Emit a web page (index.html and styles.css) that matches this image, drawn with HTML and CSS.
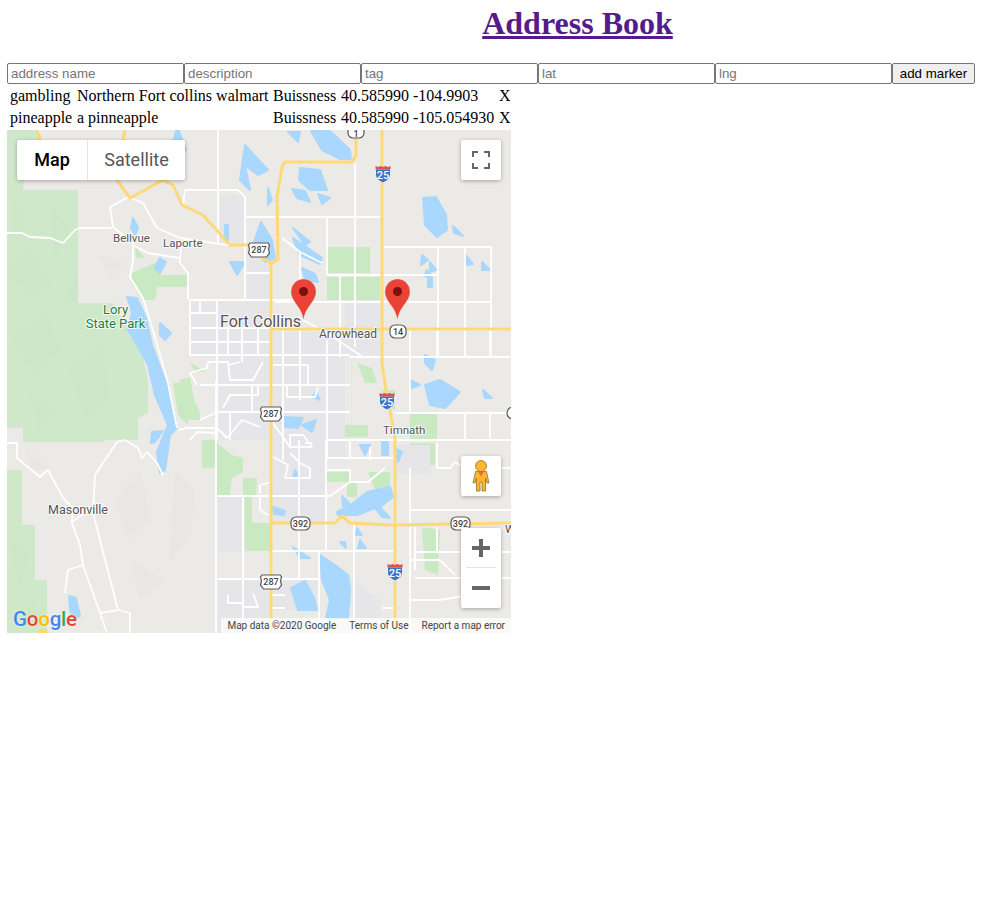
FILE: index.html
```html
<!DOCTYPE html>
<html lang="en">
<head>
    <meta charset="UTF-8">
    <title>Address Book</title>
    <link rel="stylesheet" href="styles.css">
</head>
<body>
    <h1 class="title"><a href="#">Address Book</a></h1>

    <form class="marker-form">
        <input type="text" placeholder="address name">
        <input type="text" placeholder="description">
        <input type="text" placeholder="tag">
        <input type="text" placeholder="lat">
        <input type="text" placeholder="lng">
        <button type="button">add marker</button>
    </form>

    <table class="addresses">
        <colgroup>
            <col class="col-name">
            <col class="col-desc">
            <col class="col-tag">
            <col class="col-lat">
            <col class="col-lng">
            <col>
        </colgroup>
        <tr>
            <td>gambling</td>
            <td>Northern Fort collins walmart</td>
            <td>Buissness</td>
            <td>40.585990</td>
            <td>-104.9903</td>
            <td>X</td>
        </tr>
        <tr>
            <td>pineapple</td>
            <td>a pinneapple</td>
            <td>Buissness</td>
            <td>40.585990</td>
            <td>-105.054930</td>
            <td>X</td>
        </tr>
    </table>

    <div class="map">
        <svg class="map-tiles" viewBox="7 130 504 503" width="504" height="503">
            <defs>
                <g id="pin">
                    <path class="pin-body" d="M0 41C-2 27-12.500 23-12.500 12.500a12.500 12.500 0 0 1 25 0C12.500 23 2 27 0 41Z"/>
                    <circle class="pin-dot" cx="0" cy="12.500" r="4.500"/>
                </g>
                <g id="us-shield">
                    <path class="shield" d="M-9-7h18l1.500 2-1 4 1 4-3 4h-15l-3-4 1-4-1-4Z"/>
                </g>
                <g id="i-shield">
                    <path class="i-blue" d="M-7.500-5h15v5c0 5-4 7-7.500 9-3.500-2-7.500-4-7.500-9Z"/>
                    <path class="i-red" d="M-7.500-8l2.500 1 2.500-1 2.500 1 2.500-1 2.500 1 2.500-1v3.500h-15Z"/>
                </g>
            </defs>

            <rect class="land" x="7" y="130" width="504" height="503"/>

            <!-- hill shading -->
            <path class="hill" d="M100 255 125 262 110 280ZM90 320 100 345 88 352ZM115 500 140 470 150 520 128 540ZM175 470 195 490 190 540 170 560ZM130 560 165 580 140 600ZM25 445 50 470 32 470Z"/>

            <!-- forest and parks -->
            <path class="park" d="M7 130H37L40 150 24 176 23 190H78V303H113L125 322 140 345 148 380V413L138 418V440H105V442H23V428H7Z"/>
            <path class="park" d="M7 470H22V525H35V580H47V633H7Z"/>
            <path class="park-shade" d="M7 270 30 245 50 285 30 300ZM50 200 70 230 55 260ZM12 340 45 310 60 350 35 380ZM70 370 100 345 110 400 85 420ZM30 395 60 410 40 430ZM15 200 30 215 15 235ZM65 300 78 270V303ZM10 540 30 550 20 590ZM30 600 45 625 25 625Z"/>
            <path class="park-light" d="M132 273 157 262H166L160 275H188V287H157L155 300H143L132 282ZM135 247 145 258H136Z"/>
            <path class="park-light" d="M173 383H186L200 413V420H188V425L178 415Z"/>
            <path class="park-light" d="M202 440H215V468H202ZM217 443 232 455 243 458V472L232 478 230 495H217ZM243 478H257L256 495H243ZM245 497H252V523H245ZM245 523H270V551H245Z"/>
            <path class="park-light" d="M328 247H370V273H328ZM327 277H380V300H327ZM355 303H368V327H355ZM357 363 372 368 377 383H365ZM410 413H437V440H410ZM273 482H292V493H273ZM312 497H326V523H318ZM312 468H325V482H312ZM327 472H350V482H327ZM347 482H357V497H347ZM368 472H390V490H375ZM345 425H368V437H345ZM410 443H435V465H410ZM422 527 440 530 438 575 425 570ZM195 345H210V352H195ZM190 362 205 372 195 372ZM235 380H250V385H235ZM250 368 257 378H245Z"/>
            <path class="park-light" d="M180 380 190 377 196 412 188 420 180 400ZM300 370H320V378H300ZM382 390H395V410L385 405Z"/>

            <!-- built up areas -->
            <path class="urban" d="M190 300H272V440H216V355H190Z"/>
            <path class="urban" d="M272 332H345V460H272ZM272 460H326V523H272ZM345 303H380V357H345ZM247 250H272V300H247ZM396 445H430V475H396ZM216 496H245V552H216ZM216 580H271V633H216ZM340 570 380 600V618H355ZM220 195H245V245H220ZM272 580H320V610H272Z"/>

            <!-- water -->
            <path class="water" d="M127 297 137 298 146 318 152 345 165 380 170 395 177 428 170 435 165 470 160 473 157 452 168 425 155 395 148 365 137 345 128 330 132 312Z"/>
            <path class="water" d="M160 323 171 333 165 340 160 335ZM133 218 138 228 135 235 131 228ZM160 258 166 262 160 273 155 268ZM69 596 76 598 80 616 74 620 70 610ZM152 432 163 431 155 442 151 443ZM176 131H179L186 150 178 160 173 142ZM245 145 268 170 258 175 245 165 250 190 240 180ZM225 225H228V240H225ZM230 262H245L237 275ZM261 222 272 240 275 258 265 262 253 245Z"/>
            <path class="water" d="M311 131H330L350 150 351 159 340 159 322 150ZM300 168 320 170 327 190 310 190 299 180ZM292 189 305 191 310 202 297 198ZM318 194 330 198 322 204ZM293 228 310 242 305 245ZM293 238 322 258 320 264 300 255ZM302 268 315 274 318 282 305 280ZM423 198 436 197 446 215 447 230 437 237 425 225ZM453 226 463 236 454 233ZM288 132 300 132 298 142ZM268 188 272 200 268 205ZM422 255 428 260 421 265ZM427 270 432 278 424 276ZM428 277H432V287H428ZM430 262 436 270 430 272ZM466 255 473 264 466 265ZM482 262 490 270 482 270ZM425 355 435 360 432 370 425 363Z"/>
            <path class="water" d="M337 512 353 503 367 492 390 487 393 497 380 507 390 518 382 517 375 508 357 515 338 515ZM293 547 310 558 300 558ZM320 555 335 565 348 575 350 590 348 618H326L330 600 322 580ZM291 588 305 581 314 598 317 610H298ZM273 507 285 511 284 515 274 514ZM425 385 440 380 460 392 445 408 430 405ZM284 417 303 418 298 428 285 427ZM342 496 349 503 343 506ZM340 542H345L346 548ZM357 528 362 535H356ZM395 448 402 452 398 462ZM382 442H388V455H382ZM360 445 370 445 365 455ZM410 380 420 385 412 388ZM483 390 492 398 485 398ZM295 470 300 478 293 478ZM302 425 316 420 312 432 306 428ZM316 392 320 400 312 397ZM360 540 366 548 358 548Z"/>

            <!-- local roads -->
            <g class="road">
                <path d="M7 233H22L30 237 50 238 63 243 75 230 80 228H110L113 227 110 207 128 197 143 203 157 228 180 238 227 245H245"/>
                <path d="M113 227 133 243V260L130 277 143 298 155 337 168 383 177 428"/>
                <path d="M133 245 148 253 180 258 182 243M180 258V263L188 273V300"/>
                <path d="M183 207 185 190H238L245 197V300M218 130V243M245 217H380M245 273H272"/>
                <path d="M190 300H270M190 313H217M190 328H272M190 342H272M190 355H350M200 385H350M217 412H350M190 300V355M200 300V313M217 300V440M242 328V362M270 300H300"/>
                <path d="M283 328V460M300 328V400M308 365V385M273 365H308M327 340V460M228 328V355M258 328V355"/>
                <path d="M208 362 207 368 190 373 197 385M208 362H228L230 380H253L263 362M228 365 240 362M223 408 230 395H258V385M252 385V412M287 385V397H315L318 387"/>
                <path d="M273 423 290 447V435H303L312 447H290M230 412V440M200 420 217 412M190 440 197 432 217 433"/>
                <path d="M327 218V275M355 163V347M382 247H491V357M438 247V357M465 247V357M328 275H438M275 302H491M340 275V357"/>
                <path d="M282 238 300 252 322 263M300 252V282M303 320 327 333 363 357M350 357H511M410 330V413"/>
                <path d="M437 330V357M465 330V357M490 330V357M395 413H511M490 413V440M465 413V440M327 440H511"/>
                <path d="M437 443V468H450L455 462 465 468H511M410 468V523M410 510H511"/>
                <path d="M7 443H17V458L40 477 48 470 63 498 72 507V523L80 545 83 565 100 613 107 633"/>
                <path d="M117 442 95 475 93 513 118 610 130 613V633M117 442 125 440 138 448 142 458 147 452 157 463 163 475"/>
                <path d="M93 507 72 522M83 565 68 570 65 593M100 613 118 610M178 430 187 428H217L227 438 242 420 260 427"/>
                <path d="M216 380V633M216 496H330L350 482H368L385 468M216 579H320M243 496V633M272 551H393"/>
                <path d="M299 440V580M326 440V552M319 552V620M354 523V633M228 595V603H243M253 593 258 607H243M272 595H285M272 608H285"/>
                <path d="M273 457 288 465 285 478H310V468L300 463 290 453M305 443 312 443M260 493V485L272 482M260 497V510L268 515"/>
                <path d="M327 458H393M327 470H350V482M350 440V457M370 447V460M393 440H395"/>
                <path d="M410 527V633M415 527V570M382 608H395M437 527V552M410 560H440L455 575M410 600H440L500 590"/>
                <path d="M415 552H511M415 578H511"/>
            </g>

            <!-- highways -->
            <g class="hwy">
                <path d="M36 130 40 137 38 146"/>
                <path d="M125 130 122 145 117 180 130 198 163 180 173 185 182 205 203 215 230 245H250"/>
                <path d="M260 257 271 263 278 260 277 197 282 167 285 162H352L356 155V130"/>
                <path d="M271 263V633"/>
                <path d="M382 130V363L386 390 395 437V633"/>
                <path d="M271 329H340L511 329"/>
                <path d="M271 523H335L342 516 350 523 393 525 511 523"/>
            </g>
            <ellipse class="logo-road" cx="43" cy="632" rx="6" ry="3"/>

            <!-- shields -->
            <g class="shield-text">
                <use href="#us-shield" x="259" y="250"/><text x="259" y="253">287</text>
                <use href="#us-shield" x="271" y="414"/><text x="271" y="417">287</text>
                <use href="#us-shield" x="271" y="582"/><text x="271" y="585">287</text>
                <rect class="shield" x="390" y="325" width="16" height="13" rx="5"/><text x="398" y="335">14</text>
                <rect class="shield" x="291" y="517" width="19" height="13" rx="5"/><text x="300.500" y="527">392</text>
                <rect class="shield" x="451" y="517" width="19" height="13" rx="5"/><text x="460.500" y="527">392</text>
                <rect class="shield" x="348" y="125" width="16" height="13" rx="5"/><text x="356" y="137">1</text>
                <circle class="shield" cx="513" cy="413" r="6"/>
            </g>
            <g class="shield-text interstate">
                <use href="#i-shield" x="383" y="174"/><text x="383" y="179">25</text>
                <use href="#i-shield" x="387" y="401"/><text x="387" y="406">25</text>
                <use href="#i-shield" x="395" y="572"/><text x="395" y="577">25</text>
            </g>

            <!-- place names -->
            <g class="label">
                <text x="113" y="242">Bellvue</text>
                <text x="163" y="247">Laporte</text>
                <text class="label-big" x="220" y="327">Fort Collins</text>
                <text class="label-arrow" x="319" y="338">Arrowhead</text>
                <text x="383" y="434">Timnath</text>
                <text class="label-mid" x="48" y="514">Masonville</text>
                <text x="505" y="533">W</text>
                <text class="label-park" x="115.500" y="314">Lory</text>
                <text class="label-park" x="115.500" y="328">State Park</text>
            </g>

            <use href="#pin" x="303.500" y="279"/>
            <use href="#pin" x="397.500" y="279"/>
        </svg>

        <div class="map-type">
            <span class="map-type-on">Map</span>
            <span class="map-type-off">Satellite</span>
        </div>

        <div class="map-btn fullscreen">
            <svg viewBox="0 0 18 18" width="18" height="18">
                <path class="ctl-stroke" d="M1 6V1H6M12 1H17V6M17 12V17H12M6 17H1V12"/>
            </svg>
        </div>

        <div class="map-btn pegman">
            <svg viewBox="0 0 18 32" width="18" height="32">
                <circle class="peg" cx="9" cy="6" r="5.500"/>
                <path class="peg" d="M3.500 11.500H14.500L17 23H15L13.500 18V31H10V22H8V31H4.500V18L3 23H1Z"/>
                <path class="peg-neck" d="M6 11.500H12L9 16.500Z"/>
            </svg>
        </div>

        <div class="zoom-ctl">
            <div class="zoom-part">
                <svg viewBox="0 0 18 18" width="18" height="18"><path class="ctl-fill" d="M7 0H11V7H18V11H11V18H7V11H0V7H7Z"/></svg>
            </div>
            <div class="zoom-line"></div>
            <div class="zoom-part">
                <svg viewBox="0 0 18 18" width="18" height="18"><path class="ctl-fill" d="M0 7H18V11H0Z"/></svg>
            </div>
        </div>

        <div class="google-logo"><span class="g-b">G</span><span class="g-r">o</span><span class="g-y">o</span><span class="g-b">g</span><span class="g-g">l</span><span class="g-r">e</span></div>

        <div class="attribution">
            <span>Map data ©2020 Google</span>
            <span>Terms of Use</span>
            <span>Report a map error</span>
        </div>
    </div>
</body>
</html>
```

FILE: styles.css
```css
body { margin: 5px 7px 7px; font-family: "Liberation Serif", serif; font-size: 16px; background: #fff; }

.title { margin: 0 0 21px; padding-left: 173px; text-align: center; font-size: 32px; line-height: 37px; }
.title a { color: #551a8b; }

.marker-form { display: flex; height: 21px; }
.marker-form input { box-sizing: border-box; width: 177px; height: 21px; margin: 0; padding: 1px 3px; border: 1px solid #767676; border-radius: 2px; font-family: "Liberation Sans", sans-serif; font-size: 13.333px; }
.marker-form input::placeholder { color: #757575; }
.marker-form button { box-sizing: border-box; width: 83px; height: 21px; margin: 0; padding: 0; border: 1px solid #767676; border-radius: 2px; background: #efefef; color: #000; font-family: "Liberation Sans", sans-serif; font-size: 13.333px; }

.addresses { width: 506px; border-spacing: 2px; table-layout: fixed; }
.addresses td { padding: 1px; white-space: nowrap; }
.col-name { width: 65px; }
.col-desc { width: 194px; }
.col-tag { width: 66px; }
.col-lat { width: 70px; }
.col-lng { width: 84px; }

.map { position: relative; width: 504px; height: 503px; overflow: hidden; font-family: Roboto, sans-serif; }
.map-tiles { display: block; }

.land { fill: #ebeae6; }
.hill { fill: #e8e7e3; }
.park { fill: #cfe8ca; }
.park-shade { fill: #cce6c7; }
.park-light { fill: #c8e9c2; }
.urban { fill: #e6e6e8; }
.water { fill: #a9d7fd; stroke: #a9d7fd; stroke-width: 2; stroke-linejoin: round; }
.road { fill: none; stroke: #fff; stroke-width: 1.800; stroke-linejoin: round; }
.hwy { fill: none; stroke: #fdd978; stroke-width: 3; stroke-linejoin: round; }
.logo-road { fill: #fdd978; }

.pin-body { fill: #ea4335; stroke: #fff; stroke-opacity: .35; stroke-width: .6; }
.pin-dot { fill: #7d100e; }

.shield { fill: #fff; stroke: #5a5a5a; stroke-width: 1.200; }
.i-blue { fill: #3a74c8; stroke: #fff; stroke-width: .8; }
.i-red { fill: #d9534f; }
.shield-text text { font-family: Roboto, sans-serif; font-size: 9px; font-weight: 500; fill: #444; text-anchor: middle; }
.interstate text { font-size: 11px; fill: #fff; }

.label text { font-family: Roboto, sans-serif; font-size: 11.500px; fill: #555; stroke: #fff; stroke-width: 2px; stroke-opacity: .8; paint-order: stroke; }
.label .label-big { font-size: 16px; }
.label .label-mid { font-size: 12.500px; }
.label .label-arrow { font-size: 12px; }
.label .label-park { font-size: 13px; fill: #1f8044; text-anchor: middle; }

.map-type { position: absolute; left: 10px; top: 10px; display: flex; width: 168px; height: 40px; border-radius: 2px; background: #fff; box-shadow: 0 1px 4px rgba(0, 0, 0, .3); font-size: 18px; line-height: 40px; text-align: center; }
.map-type-on { width: 70px; border-right: 1px solid #e6e6e6; color: #000; font-weight: 500; }
.map-type-off { flex: 1; color: #565656; }

.map-btn { position: absolute; left: 454px; display: flex; align-items: center; justify-content: center; width: 40px; height: 40px; border-radius: 2px; background: #fff; box-shadow: 0 1px 4px rgba(0, 0, 0, .3); }
.fullscreen { top: 10px; }
.pegman { top: 326px; }
.ctl-stroke { fill: none; stroke: #666; stroke-width: 2; }
.ctl-fill { fill: #666; }
.peg { fill: #fdb62e; stroke: #8c7434; stroke-width: .8; }
.peg-neck { fill: #e2702e; }

.zoom-ctl { position: absolute; left: 454px; top: 398px; width: 40px; height: 80px; border-radius: 2px; background: #fff; box-shadow: 0 1px 4px rgba(0, 0, 0, .3); }
.zoom-part { display: flex; align-items: center; justify-content: center; height: 40px; margin-bottom: -1px; }
.zoom-line { height: 1px; margin: 0 5px; background: #e6e6e6; }

.google-logo { position: absolute; left: 6px; bottom: 1px; font-family: Roboto, sans-serif; font-size: 20.500px; font-weight: 500; line-height: 26px; letter-spacing: -.2px; text-shadow: 0 0 2px #fff; }
.g-b { color: #4285f4; }
.g-r { color: #ea4335; }
.g-y { color: #fbbc05; }
.g-g { color: #34a853; }

.attribution { position: absolute; right: 0; bottom: 0; display: flex; gap: 13px; height: 15px; padding: 0 6px 0 6px; background: rgba(255, 255, 255, .7); color: #444; font-size: 10px; line-height: 15px; white-space: nowrap; }
```
